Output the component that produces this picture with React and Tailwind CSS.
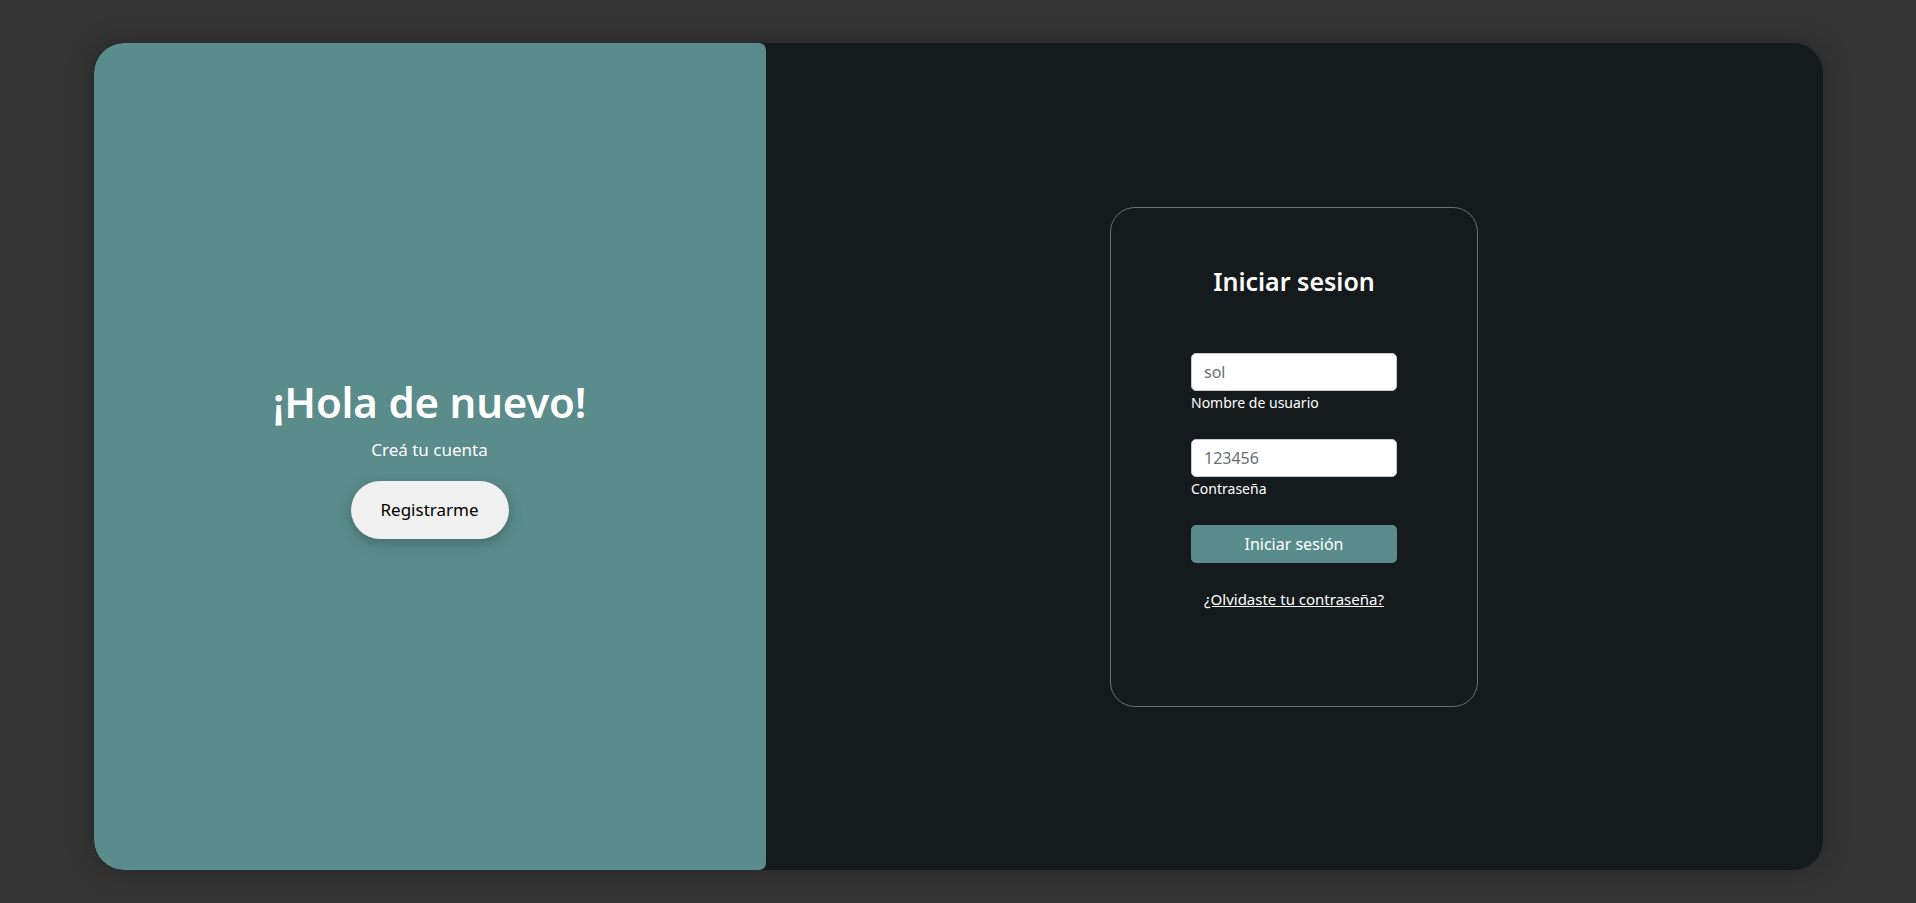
import React, { useState } from "react";

export default function App() {
    const [usuario, setUsuario] = useState("");
    const [clave, setClave] = useState("");

    const handleSubmit = (e) => {
        e.preventDefault();
    };

    return (
        <div
            className="min-h-screen w-full bg-[#353535] pt-[43px]"
            style={{ fontFamily: '"Noto Sans", "Open Sans", sans-serif' }}
        >
            <div className="mx-auto flex h-[827px] w-[1729px] overflow-hidden rounded-[30px] bg-[#151b1d] shadow-[0_0_24px_rgba(0,0,0,0.35)]">
                {/* panel de registro */}
                <div className="flex w-[672px] flex-col items-center justify-center rounded-l-[30px] rounded-r-[7px] bg-[#5a8c8b] pt-[4px] text-white">
                    <h1 className="text-[42px] font-semibold leading-[48px] tracking-[-0.2px]">¡Hola de nuevo!</h1>
                    <p className="mt-[12px] text-[17px] leading-[24px]">Creá tu cuenta</p>
                    <button
                        type="button"
                        className="mt-[19px] h-[58px] w-[158px] rounded-full bg-[#f0f0f0] text-[17px] text-black shadow-[0_4px_14px_rgba(0,0,0,0.25)]"
                    >
                        Registrarme
                    </button>
                </div>

                {/* panel de login */}
                <div className="flex flex-1 items-center justify-center">
                    <form
                        onSubmit={handleSubmit}
                        className="flex h-[500px] w-[368px] flex-col rounded-[25px] border border-[#6b6f70] px-[80px] pt-[56px] text-white"
                    >
                        <h2 className="text-center text-[25px] font-semibold leading-[34px]">Iniciar sesion</h2>

                        <input
                            type="text"
                            value={usuario}
                            onChange={(e) => setUsuario(e.target.value)}
                            placeholder="sol"
                            className="mt-[55px] h-[38px] w-full rounded-[5px] border border-[#c9c9c9] bg-white px-[12px] text-[16px] text-black placeholder:text-[#6f6f6f] outline-none"
                        />
                        <label className="text-[14px] leading-[24px]">Nombre de usuario</label>

                        <input
                            type="text"
                            value={clave}
                            onChange={(e) => setClave(e.target.value)}
                            placeholder="123456"
                            className="mt-[24px] h-[38px] w-full rounded-[5px] border border-[#c9c9c9] bg-white px-[12px] text-[16px] text-black placeholder:text-[#6f6f6f] outline-none"
                        />
                        <label className="text-[14px] leading-[24px]">Contraseña</label>

                        <button
                            type="submit"
                            className="mt-[24px] h-[38px] w-full rounded-[5px] bg-[#5a8c8b] text-[16px] text-white"
                        >
                            Iniciar sesión
                        </button>

                        <a href="#" className="mt-[24px] text-center text-[15px] leading-[24px] text-white underline">
                            ¿Olvidaste tu contraseña?
                        </a>
                    </form>
                </div>
            </div>
        </div>
    );
}
